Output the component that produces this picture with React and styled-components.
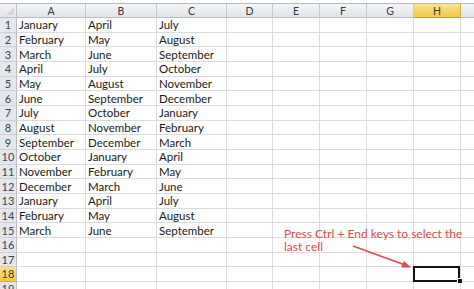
import React from "react";
import styled, { createGlobalStyle, css } from "styled-components";

const Global = createGlobalStyle`
  html, body { margin: 0; padding: 0; background: #fff; }
  body { font-family: "Lato", "Open Sans", sans-serif; }
`;

const MONTHS = ["January","February","March","April","May","June","July","August","September","October","November","December"];
const COLS = ["A","B","C","D","E","F","G","H",""];
const WIDTHS = [69, 71, 70, 46, 47, 47, 47, 47, 60];
const ROWS = 19;
const SEL_COL = 7;
const SEL_ROW = 18;

const Page = styled.div`
  position: relative;
  width: 474px;
  height: 289px;
  overflow: hidden;
  padding-top: 3px;
  box-sizing: border-box;
`;

const Sheet = styled.div`
  display: grid;
  grid-template-columns: 17px ${WIDTHS.map((w) => w + "px").join(" ")};
  grid-template-rows: 14px;
  grid-auto-rows: 14.67px;
  border-top: 1px solid #b5bac1;
`;

const Corner = styled.div`
  position: relative;
  box-sizing: border-box;
  background: linear-gradient(#f3f4f6, #e2e5e9);
  border-right: 1px solid #b9bec5;
  border-bottom: 1px solid #b9bec5;
  &::after {
    content: "";
    position: absolute;
    right: 2px;
    bottom: 2px;
    border-left: 8px solid transparent;
    border-bottom: 8px solid #d2d6db;
  }
`;

const ColHead = styled.div`
  box-sizing: border-box;
  display: flex;
  align-items: center;
  justify-content: center;
  font-size: 10.5px;
  color: #333a44;
  background: linear-gradient(#f4f5f7, #e1e4e8);
  border-right: 1px solid #c3c8ce;
  border-bottom: 1px solid #b9bec5;
  ${(p) =>
    p.$active &&
    css`
      background: linear-gradient(#fbe48e, #f3c74e);
      border-right-color: #dcb04a;
      border-bottom-color: #c99a2e;
      color: #3a3a2a;
    `}
`;

const RowHead = styled.div`
  box-sizing: border-box;
  display: flex;
  align-items: center;
  justify-content: center;
  font-size: 11px;
  color: #3b4452;
  background: #e4e7eb;
  border-right: 1px solid #b9bec5;
  border-bottom: 1px solid #cdd1d6;
  ${(p) =>
    p.$active &&
    css`
      background: linear-gradient(#fbe48e, #f3c74e);
      border-bottom-color: #d6a93d;
      color: #3a3a2a;
    `}
`;

const Cell = styled.div`
  position: relative;
  box-sizing: border-box;
  display: flex;
  align-items: center;
  padding-left: 2px;
  font-size: 11.5px;
  color: #1a1a1a;
  white-space: nowrap;
  border-right: 1px solid #dadcdf;
  border-bottom: 1px solid #dadcdf;
  ${(p) =>
    p.$selected &&
    css`
      &::after {
        content: "";
        position: absolute;
        left: -1px;
        top: -1px;
        right: 0;
        bottom: -1px;
        border: 2px solid #111;
      }
      &::before {
        content: "";
        position: absolute;
        right: -3px;
        bottom: -3px;
        width: 4px;
        height: 4px;
        background: #111;
        border: 1px solid #fff;
        z-index: 2;
      }
    `}
`;

const Note = styled.div`
  position: absolute;
  left: 284px;
  top: 227px;
  width: 190px;
  font-size: 12px;
  line-height: 13px;
  color: #e8454a;
`;

const Arrow = styled.svg`
  position: absolute;
  left: 0;
  top: 0;
  pointer-events: none;
`;

function cellText(col, row) {
  if (row > 15 || col > 2) return "";
  return MONTHS[(row - 1 + col * 3) % 12];
}

export default function App() {
  const cells = [];
  cells.push(<Corner key="corner" />);
  COLS.forEach((c, i) => cells.push(<ColHead key={"h" + i} $active={i === SEL_COL}>{c}</ColHead>));
  for (let r = 1; r <= ROWS; r++) {
    cells.push(<RowHead key={"r" + r} $active={r === SEL_ROW}>{r}</RowHead>);
    COLS.forEach((c, i) =>
      cells.push(
        <Cell key={r + "-" + i} $selected={r === SEL_ROW && i === SEL_COL}>
          {cellText(i, r)}
        </Cell>
      )
    );
  }
  return (
    <>
      <Global />
      <Page>
        <Sheet>{cells}</Sheet>
        <Note>
          Press Ctrl + End keys to select the
          <br />
          last cell
        </Note>
        <Arrow width="474" height="289" viewBox="0 0 474 289">
          <line x1="353" y1="246" x2="405" y2="265" stroke="#e8454a" strokeWidth="1.5" />
          <polygon points="411,267.5 401,267.5 404,261" fill="#e8454a" />
        </Arrow>
      </Page>
    </>
  );
}
